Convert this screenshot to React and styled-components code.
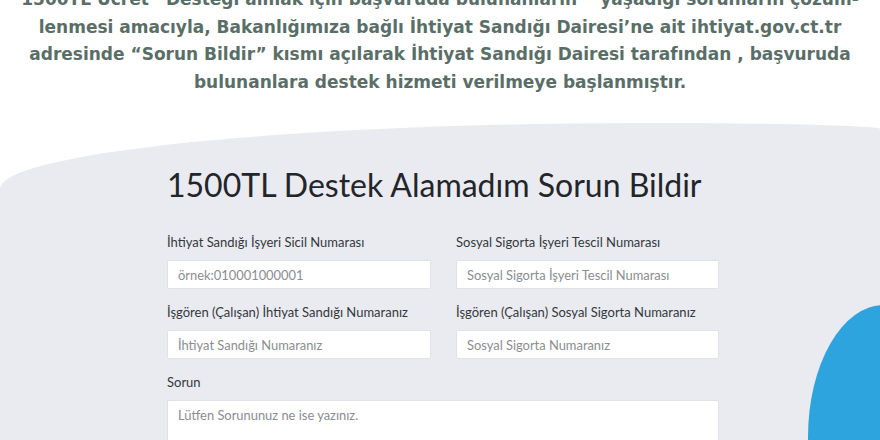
import React from 'react';
import styled, { createGlobalStyle } from 'styled-components';

const GlobalStyle = createGlobalStyle`
  html, body {
    margin: 0;
    padding: 0;
    background: #ffffff;
  }
  * { box-sizing: border-box; }
`;

const Page = styled.div`
  position: relative;
  width: 880px;
  height: 440px;
  overflow: hidden;
  background: #ffffff;
`;

const Intro = styled.p`
  margin: -14px 0 0;
  text-align: center;
  font-family: "DejaVu Sans", "Open Sans", sans-serif;
  font-weight: 700;
  font-size: 17px;
  line-height: 27.5px;
  color: #5a6e68;
`;

const Line = styled.span`
  display: block;
  white-space: nowrap;
`;

const Panel = styled.section`
  margin-top: 27px;
  height: 400px;
  background: #e9ebf0;
  border-top-left-radius: 650px 66px;
  border-top-right-radius: 230px 6px;
  padding: 44px 0 0 167px;
`;

const Title = styled.h1`
  margin: 0 0 31px 0;
  font-family: Lato, "Noto Sans", sans-serif;
  font-weight: 400;
  font-size: 32px;
  line-height: 36px;
  color: #222529;
`;

const Form = styled.form`
  width: 552px;
  display: grid;
  grid-template-columns: 264px 263px;
  column-gap: 25px;
  row-gap: 15px;
`;

const Field = styled.div`
  display: flex;
  flex-direction: column;
  grid-column: ${p => (p.$wide ? '1 / -1' : 'auto')};
`;

const Label = styled.label`
  font-family: Lato, "Noto Sans", sans-serif;
  font-size: 13px;
  line-height: 16px;
  color: #34383c;
  margin-bottom: 10px;
`;

const Input = styled.input`
  height: 29px;
  padding: 0 10px;
  border: 1px solid #dfe2e7;
  border-radius: 2px;
  background: #ffffff;
  font-family: Lato, "Noto Sans", sans-serif;
  font-size: 12.9px;
  color: #333;
  outline: none;
  &::placeholder { color: #8a8d91; }
`;

const TextArea = styled.textarea`
  height: 80px;
  padding: 6px 10px;
  border: 1px solid #dfe2e7;
  border-radius: 2px;
  background: #ffffff;
  font-family: Lato, "Noto Sans", sans-serif;
  font-size: 12.9px;
  line-height: 16px;
  resize: none;
  outline: none;
  &::placeholder { color: #8a8d91; }
`;

const Blob = styled.div`
  position: absolute;
  left: 808px;
  top: 305px;
  width: 200px;
  height: 300px;
  background: #2ea4de;
  border-top-left-radius: 76px 132px;
`;

const fields = [
  { label: 'İhtiyat Sandığı İşyeri Sicil Numarası', placeholder: 'örnek:010001000001' },
  { label: 'Sosyal Sigorta İşyeri Tescil Numarası', placeholder: 'Sosyal Sigorta İşyeri Tescil Numarası' },
  { label: 'İşgören (Çalışan) İhtiyat Sandığı Numaranız', placeholder: 'İhtiyat Sandığı Numaranız' },
  { label: 'İşgören (Çalışan) Sosyal Sigorta Numaranız', placeholder: 'Sosyal Sigorta Numaranız' },
];

export default function App() {
  return (
    <>
      <GlobalStyle />
      <Page>
        <Intro>
          <Line>1500TL Ücret” Desteği almak için başvuruda bulunanların “ yaşadığı sorunların çözüm-</Line>
          <Line>lenmesi amacıyla, Bakanlığımıza bağlı İhtiyat Sandığı Dairesi’ne ait ihtiyat.gov.ct.tr</Line>
          <Line>adresinde “Sorun Bildir” kısmı açılarak İhtiyat Sandığı Dairesi tarafından , başvuruda</Line>
          <Line>bulunanlara destek hizmeti verilmeye başlanmıştır.</Line>
        </Intro>
        <Panel>
          <Title>1500TL Destek Alamadım Sorun Bildir</Title>
          <Form>
            {fields.map(f => (
              <Field key={f.label}>
                <Label>{f.label}</Label>
                <Input placeholder={f.placeholder} />
              </Field>
            ))}
            <Field $wide>
              <Label>Sorun</Label>
              <TextArea placeholder="Lütfen Sorununuz ne ise yazınız." />
            </Field>
          </Form>
        </Panel>
        <Blob />
      </Page>
    </>
  );
}
